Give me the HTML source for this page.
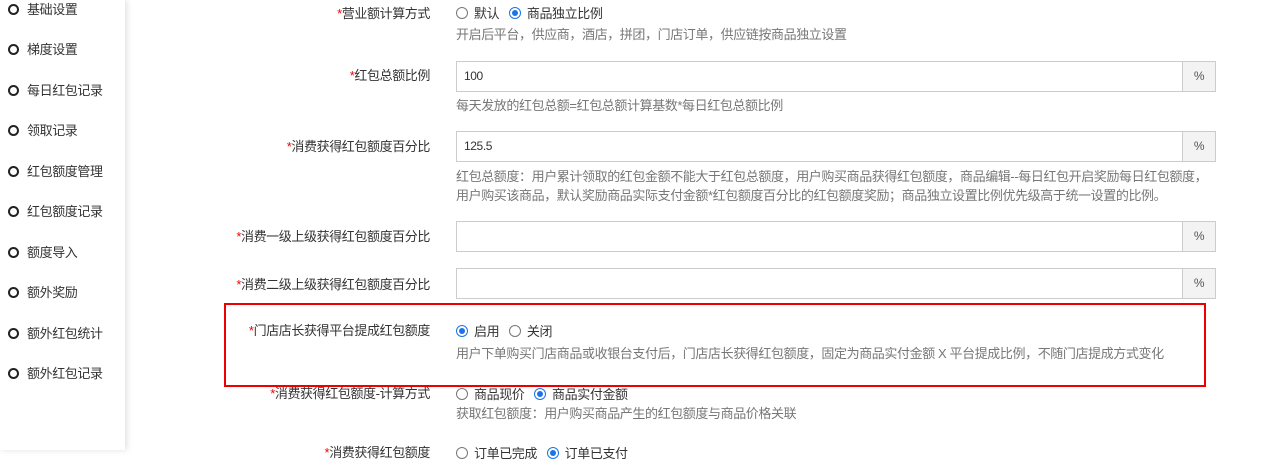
<!DOCTYPE html>
<html><head><meta charset="utf-8"><style>
*{margin:0;padding:0;box-sizing:border-box}
body{width:1282px;height:450px;overflow:hidden;background:#fff;font-family:"Liberation Sans","Noto Sans CJK SC",sans-serif;font-size:13px;color:#333;position:relative;letter-spacing:-0.4px}
.side{position:absolute;left:0;top:0;width:125px;height:450px;background:#fff;box-shadow:2px 0 6px rgba(0,0,0,.12)}
.si{position:absolute;left:8px;height:20px;line-height:20px;font-size:13px;color:#333}
.si i{display:inline-block;width:11px;height:11px;border:2px solid #222;border-radius:50%;vertical-align:-1px;margin-right:8px}
.lab{position:absolute;right:852px;text-align:right;white-space:nowrap;color:#333}
.lab b{color:#e00;font-weight:normal}
.inp{position:absolute;left:456px;width:760px;height:31px;border:1px solid #ccc;font-size:12px;line-height:29px;padding-left:7px}
.inp span{position:absolute;right:0;top:0;width:33px;height:29px;border-left:1px solid #ccc;background:#f3f3f3;text-align:center;color:#555}
.help{position:absolute;left:456px;color:#777;font-size:13px;white-space:nowrap;line-height:20px}
.rad{position:absolute;left:456px;white-space:nowrap}
.r{display:inline-block;width:12px;height:12px;border:1px solid #777;border-radius:50%;vertical-align:-1px;margin-right:6px;position:relative}
.r.on{border-color:#1a73e8}
.r.on:after{content:"";position:absolute;left:2px;top:2px;width:6px;height:6px;border-radius:50%;background:#1a73e8}
.box{position:absolute;left:224px;top:303px;width:982px;height:84px;border:2px solid #e00}
</style></head><body>
<div class="side"></div>
<div class="si" style="top:0px"><i></i>基础设置</div>
<div class="si" style="top:40px"><i></i>梯度设置</div>
<div class="si" style="top:81px"><i></i>每日红包记录</div>
<div class="si" style="top:121px"><i></i>领取记录</div>
<div class="si" style="top:162px"><i></i>红包额度管理</div>
<div class="si" style="top:202px"><i></i>红包额度记录</div>
<div class="si" style="top:243px"><i></i>额度导入</div>
<div class="si" style="top:283px"><i></i>额外奖励</div>
<div class="si" style="top:324px"><i></i>额外红包统计</div>
<div class="si" style="top:364px"><i></i>额外红包记录</div>

<div class="lab" style="top:3px"><b>*</b>营业额计算方式</div>
<div class="rad" style="top:3px"><span class="r"></span>默认&nbsp;&nbsp;&nbsp;<span class="r on"></span>商品独立比例</div>
<div class="help" style="top:25px">开启后平台，供应商，酒店，拼团，门店订单，供应链按商品独立设置</div>

<div class="lab" style="top:65px"><b>*</b>红包总额比例</div>
<div class="inp" style="top:61px">100<span>%</span></div>
<div class="help" style="top:96px">每天发放的红包总额=红包总额计算基数*每日红包总额比例</div>

<div class="lab" style="top:136px"><b>*</b>消费获得红包额度百分比</div>
<div class="inp" style="top:131px">125.5<span>%</span></div>
<div class="help" style="top:167px">红包总额度：用户累计领取的红包金额不能大于红包总额度，用户购买商品获得红包额度，商品编辑--每日红包开启奖励每日红包额度，</div>
<div class="help" style="top:186px">用户购买该商品，默认奖励商品实际支付金额*红包额度百分比的红包额度奖励；商品独立设置比例优先级高于统一设置的比例。</div>

<div class="lab" style="top:226px"><b>*</b>消费一级上级获得红包额度百分比</div>
<div class="inp" style="top:221px"><span>%</span></div>
<div class="lab" style="top:274px"><b>*</b>消费二级上级获得红包额度百分比</div>
<div class="inp" style="top:268px"><span>%</span></div>

<div class="box"></div>
<div class="lab" style="top:320px"><b>*</b>门店店长获得平台提成红包额度</div>
<div class="rad" style="top:321px"><span class="r on"></span>启用&nbsp;&nbsp;&nbsp;<span class="r"></span>关闭</div>
<div class="help" style="top:344px">用户下单购买门店商品或收银台支付后，门店店长获得红包额度，固定为商品实付金额 X 平台提成比例，不随门店提成方式变化</div>

<div class="lab" style="top:383px"><b>*</b>消费获得红包额度-计算方式</div>
<div class="rad" style="top:384px"><span class="r"></span>商品现价&nbsp;&nbsp;&nbsp;<span class="r on"></span>商品实付金额</div>
<div class="help" style="top:404px">获取红包额度：用户购买商品产生的红包额度与商品价格关联</div>

<div class="lab" style="top:442px"><b>*</b>消费获得红包额度</div>
<div class="rad" style="top:443px"><span class="r"></span>订单已完成&nbsp;&nbsp;&nbsp;<span class="r on"></span>订单已支付</div>
</body></html>
